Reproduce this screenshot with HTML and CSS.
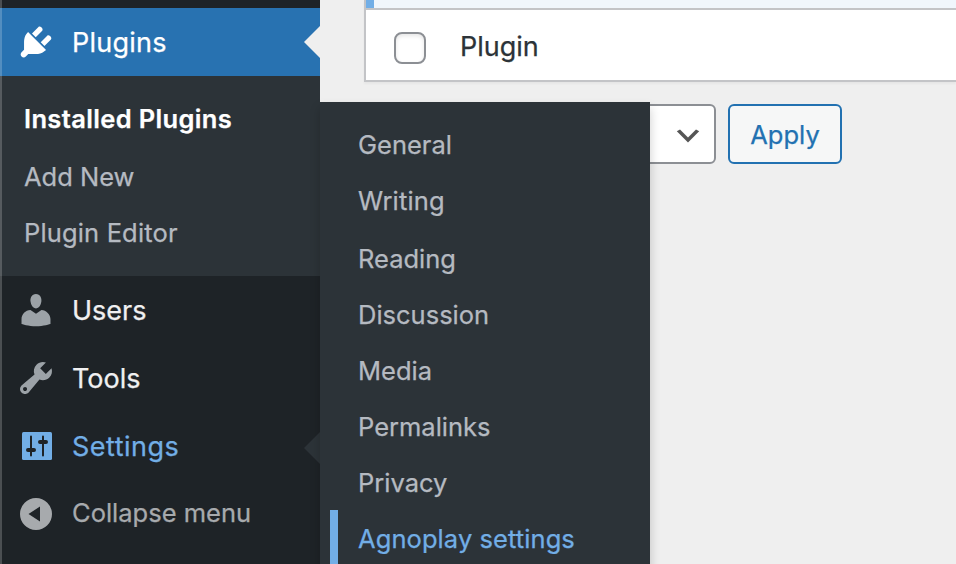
FILE: index.html
```html
<!DOCTYPE html>
<html lang="en">
<head>
<meta charset="utf-8">
<title>Plugins</title>
<link rel="stylesheet" href="styles.css">
</head>
<body>
<div class="admin">
  <nav class="sidebar">
    <a class="item current"><svg class="icon" viewBox="0 0 20 20"><path d="M13.11 4.36L9.87 7.6 8 5.73l3.24-3.24c.35-.34 1.05-.2 1.56.32.52.51.66 1.21.31 1.55zm-8 1.77l.91-1.12 9.01 9.01-1.19.84c-.71.71-2.63 1.16-3.82 1.16H6.14L4.9 17.26c-.59.59-1.54.59-2.12 0-.59-.58-.59-1.53 0-2.12l1.24-1.24v-3.88c0-1.13.4-3.19 1.09-3.89zm7.26 3.97l3.24-3.24c.34-.35 1.04-.21 1.55.31.52.51.66 1.21.31 1.55l-3.24 3.25z"/></svg><span class="t-plugins">Plugins</span></a>
    <div class="submenu">
      <a class="sub active"><span class="t-installed">Installed Plugins</span></a>
      <a class="sub spaced"><span>Add New</span></a>
      <a class="sub"><span class="t-editor">Plugin Editor</span></a>
    </div>
    <a class="item"><svg class="icon" viewBox="0 0 20 20"><path d="M10 9.25c-2.27 0-2.73-3.44-2.73-3.44C7 4.02 7.82 2 9.97 2c2.16 0 2.98 2.02 2.71 3.81 0 0-.41 3.44-2.68 3.44zm0 2.57L12.72 10c2.39 0 4.52 2.33 4.52 4.53v2.49s-3.65 1.13-7.24 1.13c-3.65 0-7.24-1.13-7.24-1.13v-2.49c0-2.25 1.94-4.48 4.47-4.48z"/></svg><span>Users</span></a>
    <a class="item"><svg class="icon" viewBox="0 0 20 20"><path d="M16.68 9.77c-1.34 1.34-3.3 1.67-4.95.99l-5.41 6.52c-.99.99-2.59.99-3.58 0s-.99-2.59 0-3.57l6.52-5.42c-.68-1.65-.35-3.61.99-4.95 1.28-1.28 3.12-1.62 4.72-1.06l-2.89 2.89 2.82 2.82 2.86-2.87c.53 1.58.18 3.39-1.08 4.65zM3.81 16.21c.4.39 1.04.39 1.43 0 .4-.4.4-1.04 0-1.43-.39-.4-1.03-.4-1.43 0-.39.39-.39 1.03 0 1.43z"/></svg><span>Tools</span></a>
    <a class="item open"><svg class="icon" viewBox="0 0 40 40"><rect x="6" y="6" width="30" height="28" rx="1.5"/><g class="knobs"><path d="M15 10.5V29.500M27 10.500V29.500"/><path class="wide" d="M12 24H18M24 16H30"/></g></svg><span class="t-settings">Settings</span></a>
    <a class="item collapse"><svg class="icon" viewBox="0 0 40 40"><path fill-rule="evenodd" d="M20 4a16 16 0 1 1 0 32a16 16 0 1 1 0-32zM24 12.500L12.500 20L24 27.500z"/></svg><span>Collapse menu</span></a>
  </nav>
  <main class="content">
    <div class="table">
      <div class="row-active"></div>
      <div class="row-foot"><span class="checkbox"></span><span class="t-plugin">Plugin</span></div>
    </div>
    <div class="actions">
      <div class="select"><svg viewBox="0 0 20 20"><path d="M5 6l5 5 5-5 2 1-7 7-7-7 2-1z"/></svg></div>
      <a class="button"><span>Apply</span></a>
    </div>
  </main>
  <div class="flyout">
    <a class="sub"><span>General</span></a>
    <a class="sub"><span class="t-writing">Writing</span></a>
    <a class="sub spaced"><span>Reading</span></a>
    <a class="sub"><span>Discussion</span></a>
    <a class="sub"><span>Media</span></a>
    <a class="sub"><span>Permalinks</span></a>
    <a class="sub"><span>Privacy</span></a>
    <a class="sub selected"><span class="t-agnoplay">Agnoplay settings</span></a>
  </div>
</div>
</body>
</html>
```
FILE: styles.css
```css
* { box-sizing: border-box; }
body { margin: 0; background: #efefef; font-family: Inter, "Liberation Sans", sans-serif; -webkit-text-stroke: .25px currentColor; }
.admin { position: relative; display: flex; width: 956px; height: 564px; overflow: hidden; }
.admin::before { content: ""; position: absolute; z-index: 3; left: 0; top: 0; width: 2px; height: 100%; background: rgba(255, 255, 255, .2); }
.sidebar { width: 320px; flex: none; padding-top: 8px; background: #1e2327; }
.item { position: relative; display: flex; align-items: center; height: 68px; padding-left: 16px; gap: 16px; color: #f0f0f1; font-size: 27px; line-height: 36px; }
.item span, .sub span { white-space: nowrap; }
.item span { padding-top: 2px; }
.icon { width: 40px; height: 40px; fill: #9ca2a7; }
.current { background: #2872b1; color: #fff; }
.current .icon { fill: #fff; }
.current::after, .open::after { content: ""; position: absolute; right: 0; top: 18px; border: 16px solid transparent; border-left: 0; border-right-color: #efefef; }
.open::after { border-right-color: #2c3338; top: 20px; }
.open { color: #72aee6; }
.open .icon { fill: #72aee6; }
.knobs { fill: none; stroke: #1e2327; stroke-width: 2; stroke-linecap: round; }
.knobs .wide { stroke-width: 4; }
.collapse { color: #a7aaad; font-size: 25.500px; }
.item.collapse span { padding: 0 0 2px; }
.collapse .icon { fill: #a7aaad; }
.submenu { height: 200px; padding-top: 14px; background: #2c3338; }
.sub { display: flex; align-items: center; height: 56px; padding: 2px 0 0 24px; color: #b5bac1; font-size: 25.500px; line-height: 36px; }
.spaced { margin-top: 2px; }
.active { color: #fff; font-weight: 600; }
.flyout { position: absolute; z-index: 2; left: 320px; top: 102px; width: 330px; height: 480px; padding-top: 14px; background: #2c3338; box-shadow: 0 6px 10px rgba(0, 0, 0, .2); }
.flyout .sub { margin-left: 10px; padding-left: 28px; }
.flyout .selected { border-left: 8px solid #72aee6; padding-left: 20px; color: #72aee6; }
.content { flex: 1; padding-left: 44px; }
.table { height: 82px; border: 2px solid #c3c4c7; border-width: 0 0 2px 2px; background: #fff; box-shadow: 0 2px 2px rgba(0, 0, 0, .04); }
.row-active { height: 10px; background: #f0f6fc; border-bottom: 2px solid #c3c4c7; box-shadow: inset 8px 0 #72aee6; }
.row-foot { display: flex; align-items: center; height: 70px; padding: 6px 0 0 28px; gap: 34px; color: #2c3338; font-size: 27px; }
.t-plugin { padding-bottom: 4px; }
.checkbox { width: 32px; height: 32px; border: 2px solid #8c8f94; border-radius: 8px; background: #fff; box-shadow: inset 0 2px 4px rgba(0, 0, 0, .1); }
.actions { display: flex; gap: 12px; margin-top: 22px; }
.select { width: 352px; height: 60px; padding: 14px 10px; border: 2px solid #8c8f94; border-radius: 6px; background: #fff; text-align: right; }
.select svg { width: 32px; height: 32px; fill: #555; }
.button { display: flex; align-items: center; justify-content: center; width: 114px; height: 60px; border: 2px solid #2271b1; border-radius: 6px; background: #f6f7f7; color: #2271b1; font-size: 25.500px; }
.t-plugins { letter-spacing: .25px; }
.t-settings { letter-spacing: .5px; }
.t-installed { letter-spacing: .35px; }
.t-editor, .t-writing { letter-spacing: .15px; }
.t-agnoplay { letter-spacing: .08px; }
```
